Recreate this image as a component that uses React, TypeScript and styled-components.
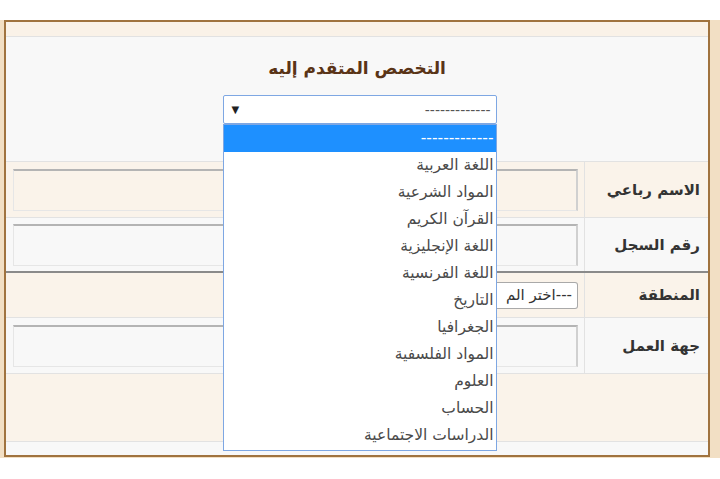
import styled, { createGlobalStyle } from "styled-components";

const Global = createGlobalStyle`
  body {
    margin: 0;
    background: #ffffff;
    font-family: "DejaVu Sans", "Liberation Sans", sans-serif;
  }
`;

const Outer = styled.div`
  margin-top: 20px;
  background: #f2dfc4;
  padding: 0 10px 1px 4px;
`;

const Frame = styled.div`
  direction: rtl;
  border: 2px solid #a0733f;
  background: #f8f8f8;
`;

const TopStrip = styled.div`
  height: 14px;
  background: #faf2e8;
  border-bottom: 1px solid #e2e2e2;
`;

const Section = styled.div`
  height: 125px;
  display: flex;
  flex-direction: column;
  align-items: center;
  padding-top: 19px;
  box-sizing: border-box;
  border-bottom: 1px solid #e2e2e2;
`;

const Title = styled.h3`
  margin: 0 0 14px;
  font-size: 17px;
  font-weight: bold;
  color: #5a3417;
  line-height: 25px;
`;

const SelectWrap = styled.div`
  position: relative;
  width: 274px;
  margin-left: 5px;
`;

const SelectBox = styled.div`
  height: 29px;
  box-sizing: border-box;
  border: 1px solid #7ea7e3;
  border-radius: 2px;
  background: #fff;
  display: flex;
  align-items: center;
  justify-content: space-between;
  padding: 0 5px 0 8px;
  font-size: 14px;
  color: #555;
`;

const Arrow = styled.span`
  font-size: 10px;
  color: #222;
`;

const List = styled.ul`
  position: absolute;
  top: 29px;
  left: 0;
  right: 0;
  margin: 0;
  padding: 0 0 1px;
  list-style: none;
  background: #fff;
  border: 1px solid #7ea7e3;
  z-index: 5;
`;

const Option = styled.li<{ $active?: boolean }>`
  height: 27px;
  line-height: 27px;
  padding: 0 2px;
  font-size: 15.5px;
  color: ${(p) => (p.$active ? "#fff" : "#4a4a4a")};
  background: ${(p) => (p.$active ? "#1e90ff" : "transparent")};
  white-space: nowrap;
  overflow: hidden;
`;

const Row = styled.div<{ $h: number; $tone: "beige" | "grey"; $thick?: boolean }>`
  display: flex;
  height: ${(p) => p.$h}px;
  background: ${(p) => (p.$tone === "beige" ? "#faf3ea" : "#f8f8f8")};
  border-bottom: ${(p) => (p.$thick ? "2px solid #8a8a8a" : "1px solid #e2e2e2")};
`;

const LabelCell = styled.div`
  width: 124px;
  flex-shrink: 0;
  border-left: 1px solid #e2e2e2;
  display: flex;
  align-items: center;
  padding-right: 8px;
  box-sizing: border-box;
  font-size: 15px;
  font-weight: bold;
  color: #333;
`;

const FieldCell = styled.div`
  flex: 1;
  display: flex;
  align-items: center;
  padding: 0 6px;
`;

const TextInput = styled.div`
  width: 565px;
  height: 42px;
  box-sizing: border-box;
  border-top: 2px solid #b4b4b4;
  border-right: 2px solid #d0d0d0;
  border-left: 1px solid #e6e6e6;
  border-bottom: 1px solid #e6e6e6;
`;

const SmallSelect = styled.div`
  width: 82px;
  height: 27px;
  box-sizing: border-box;
  border: 1px solid #a9a9a9;
  border-left: none;
  border-radius: 0 3px 3px 0;
  background: #fff;
  display: flex;
  align-items: center;
  padding-right: 5px;
  font-size: 15px;
  color: #333;
  white-space: nowrap;
  overflow: hidden;
`;

const Filler = styled.div`
  height: 67px;
  background: #faf3ea;
  border-bottom: 1px solid #e2e2e2;
`;

const BottomStrip = styled.div`
  height: 13px;
  background: #f8f8f8;
`;

const options = [
  "-------------",
  "اللغة العربية",
  "المواد الشرعية",
  "القرآن الكريم",
  "اللغة الإنجليزية",
  "اللغة الفرنسية",
  "التاريخ",
  "الجغرافيا",
  "المواد الفلسفية",
  "العلوم",
  "الحساب",
  "الدراسات الاجتماعية",
];

export default function App() {
  return (
    <>
      <Global />
      <Outer>
        <Frame>
          <TopStrip />
          <Section>
            <Title>التخصص المتقدم إليه</Title>
            <SelectWrap>
              <SelectBox>
                <span>-------------</span>
                <Arrow>▼</Arrow>
              </SelectBox>
              <List>
                {options.map((o, i) => (
                  <Option key={o} $active={i === 0}>
                    {o}
                  </Option>
                ))}
              </List>
            </SelectWrap>
          </Section>
          <Row $h={55} $tone="beige">
            <LabelCell>الاسم رباعي</LabelCell>
            <FieldCell>
              <TextInput />
            </FieldCell>
          </Row>
          <Row $h={53} $tone="grey" $thick>
            <LabelCell>رقم السجل</LabelCell>
            <FieldCell>
              <TextInput />
            </FieldCell>
          </Row>
          <Row $h={44} $tone="beige">
            <LabelCell>المنطقة</LabelCell>
            <FieldCell>
              <SmallSelect>---اختر الم</SmallSelect>
            </FieldCell>
          </Row>
          <Row $h={55} $tone="grey">
            <LabelCell>جهة العمل</LabelCell>
            <FieldCell>
              <TextInput />
            </FieldCell>
          </Row>
          <Filler />
          <BottomStrip />
        </Frame>
      </Outer>
    </>
  );
}
